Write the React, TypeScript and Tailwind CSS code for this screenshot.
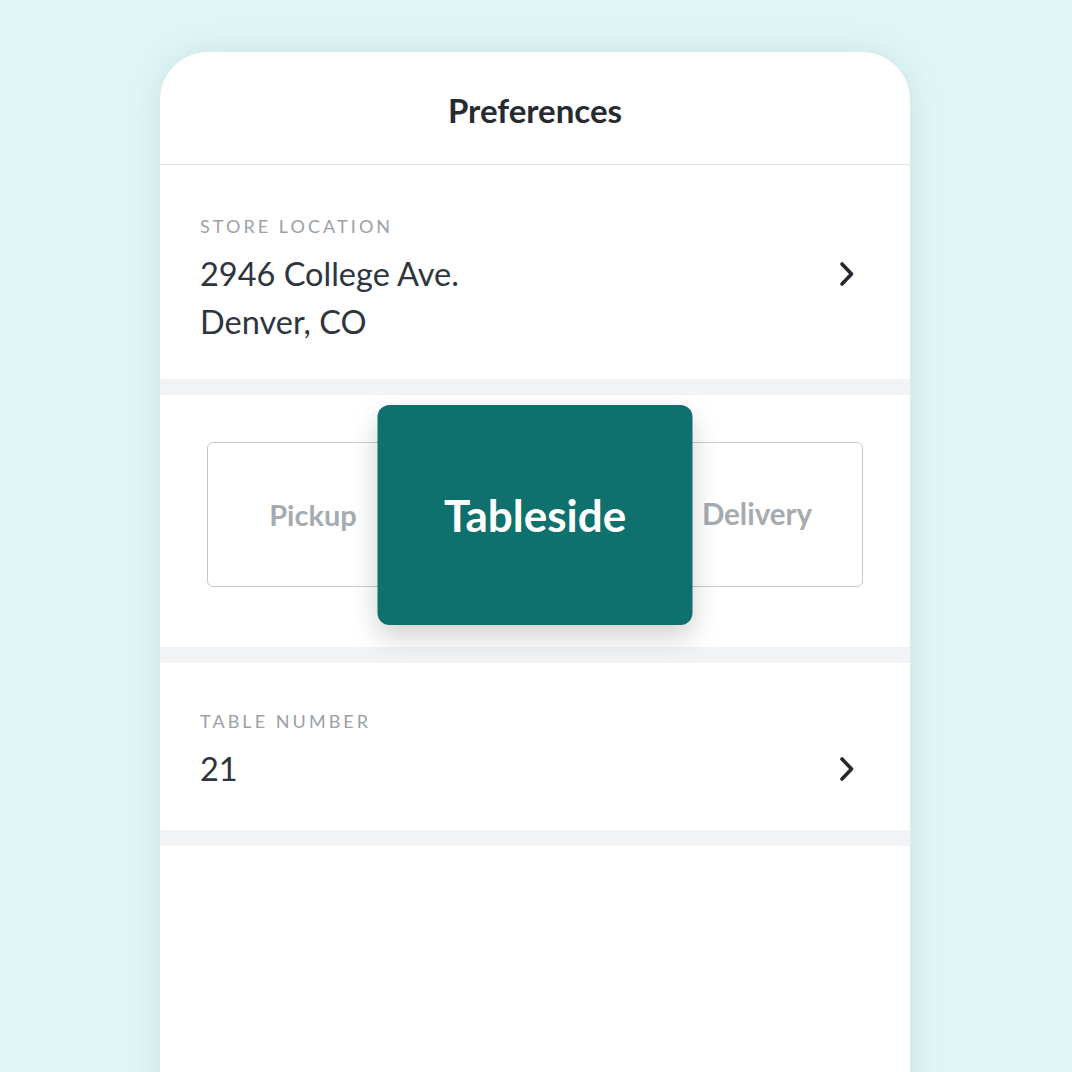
import React from 'react';

const font = { fontFamily: 'Lato, "Noto Sans", sans-serif' };

function Chevron() {
  return (
    <svg width="18" height="26" viewBox="0 0 18 26" className="shrink-0">
      <polyline
        points="4,3 13.5,13 4,23"
        fill="none"
        stroke="#23282e"
        strokeWidth="3.6"
        strokeLinecap="round"
        strokeLinejoin="round"
      />
    </svg>
  );
}

function Band() {
  return <div className="h-[16px] bg-[#f2f3f4]" />;
}

export default function App() {
  return (
    <div
      className="h-[1072px] w-full overflow-hidden bg-[#e1f7f6] pt-[52px]"
      style={font}
    >
      <div className="ml-[160px] h-[1100px] w-[750px] rounded-t-[48px] bg-white shadow-[0_0_40px_rgba(20,90,90,0.12)]">
        {/* Header */}
        <div className="flex h-[113px] items-center justify-center border-b border-[#dfe2e5] pt-[6px]">
          <h1 className="text-[33px] font-bold text-[#262b31]">Preferences</h1>
        </div>

        {/* Store location */}
        <div className="pl-[40px] pr-[54px] pt-[51px] pb-[33px]">
          <p className="text-[18px] leading-[20px] tracking-[0.17em] text-[#9ba1a7]">STORE LOCATION</p>
          <div className="mt-[14px] flex items-center justify-between">
            <span className="text-[32.5px] leading-[48px] text-[#2f353d]">2946 College Ave.</span>
            <Chevron />
          </div>
          <p className="text-[32.5px] leading-[48px] text-[#2f353d]">Denver, CO</p>
        </div>

        <Band />

        {/* Order type */}
        <div className="px-[47px] pt-[47px] pb-[60px]">
          <div className="grid h-[145px] grid-cols-3 rounded-[6px] border-[1.5px] border-[#c7cacd]">
            <div className="flex items-center justify-center pr-[8px]">
              <span className="text-[29px] font-bold text-[#a6abb0]">Pickup</span>
            </div>
            <div className="relative">
              <div className="absolute left-1/2 top-1/2 flex h-[220px] w-[315px] -translate-x-1/2 -translate-y-1/2 items-center justify-center rounded-[12px] bg-[#0f716d] shadow-[0_12px_28px_rgba(0,0,0,0.18)]">
                <span className="text-[44px] font-bold text-white">Tableside</span>
              </div>
            </div>
            <div className="flex items-center justify-center pl-[8px]">
              <span className="text-[29.5px] font-bold text-[#a6abb0]">Delivery</span>
            </div>
          </div>
        </div>

        <Band />

        {/* Table number */}
        <div className="pl-[40px] pr-[54px] pt-[48px] pb-[37px]">
          <p className="text-[18px] leading-[20px] tracking-[0.17em] text-[#9ba1a7]">TABLE NUMBER</p>
          <div className="mt-[14px] flex items-center justify-between">
            <span className="text-[32.5px] leading-[48px] text-[#2f353d]">21</span>
            <Chevron />
          </div>
        </div>

        <Band />
      </div>
    </div>
  );
}
